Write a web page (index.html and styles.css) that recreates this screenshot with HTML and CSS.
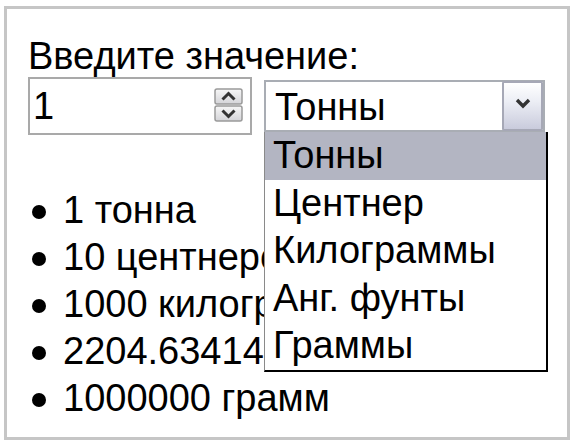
FILE: index.html
```html
<!DOCTYPE html>
<html lang="ru">
<head>
<meta charset="utf-8">
<title>Конвертер</title>
<link rel="stylesheet" href="styles.css">
</head>
<body>
<div class="frame">
  <div class="label">Введите значение:</div>
  <div class="controls">
    <div class="numbox">
      <span class="numval">1</span>
      <svg class="spin" width="29" height="34" viewBox="0 0 29 34">
        <defs>
          <linearGradient id="sg" x1="0" y1="0" x2="0" y2="1">
            <stop offset="0" stop-color="#f7f7f7"/>
            <stop offset="1" stop-color="#d4d4d8"/>
          </linearGradient>
        </defs>
        <rect x="1" y="1" width="27" height="15" rx="2" fill="url(#sg)" stroke="#9a9a9a" stroke-width="1.5"/>
        <rect x="1" y="18" width="27" height="15" rx="2" fill="url(#sg)" stroke="#9a9a9a" stroke-width="1.5"/>
        <path d="M8.5 11.5 L14.5 5.5 L20.5 11.5" fill="none" stroke="#333" stroke-width="3"/>
        <path d="M8.5 22.5 L14.5 28.5 L20.5 22.5" fill="none" stroke="#333" stroke-width="3"/>
      </svg>
    </div>
    <div class="selectwrap">
      <div class="select">
        <span class="selval">Тонны</span>
        <span class="selbtn">
          <svg width="16" height="11" viewBox="0 0 16 11">
            <path d="M2 2 L8 8 L14 2" fill="none" stroke="#333" stroke-width="3.4"/>
          </svg>
        </span>
      </div>
      <ul class="dropdown">
        <li class="opt active">Тонны</li>
        <li class="opt">Центнер</li>
        <li class="opt">Килограммы</li>
        <li class="opt">Анг. фунты</li>
        <li class="opt">Граммы</li>
      </ul>
    </div>
  </div>
  <ul class="results">
    <li>1 тонна</li>
    <li>10 центнеров</li>
    <li>1000 килограмм</li>
    <li>2204.634141 анг. фунтов</li>
    <li>1000000 грамм</li>
  </ul>
</div>
</body>
</html>
```
FILE: styles.css
```css
html, body {
  margin: 0;
  padding: 0;
  background: #ffffff;
}
body {
  font-family: "Liberation Sans", Arial, sans-serif;
  font-size: 38px;
  color: #000;
}
.frame {
  box-sizing: border-box;
  margin: 6px 0 0 4px;
  width: 566px;
  height: 434px;
  border: 3px solid #c6c6c6;
  padding: 26px 0 0 21px;
  overflow: hidden;
}
.label {
  line-height: 42px;
  height: 42px;
  white-space: nowrap;
}
.controls {
  display: flex;
  align-items: flex-start;
  gap: 12px;
}
.numbox {
  box-sizing: border-box;
  width: 224px;
  height: 58px;
  border: 2px solid #a9a9a9;
  display: flex;
  align-items: center;
  justify-content: space-between;
  padding: 0 7px 0 3px;
}
.numval {
  line-height: 1;
}
.spin {
  display: block;
  margin-top: -2px;
}
.selectwrap {
  position: relative;
  z-index: 2;
  margin-top: 3px;
}
.select {
  box-sizing: border-box;
  width: 281px;
  height: 52px;
  border: 2px solid #a9adb4;
  display: flex;
  align-items: center;
  justify-content: space-between;
  padding-left: 9px;
}
.selval {
  line-height: 1;
  margin-top: 2px;
}
.selbtn {
  box-sizing: border-box;
  width: 41px;
  height: 50px;
  margin-top: -1px;
  border: 2px solid #a6a8b6;
  border-radius: 2px;
  background: linear-gradient(#ffffff, #eceef5 40%, #c9cbdc);
  display: flex;
  align-items: center;
  justify-content: center;
}
.selbtn svg {
  display: block;
  margin-top: -4px;
}
.dropdown {
  position: absolute;
  left: 0;
  top: 100%;
  box-sizing: border-box;
  width: 284px;
  margin: 0;
  padding: 0;
  list-style: none;
  background: #fff;
  border-left: 1px solid #8a8a8a;
  border-right: 2px solid #000;
  border-bottom: 2px solid #000;
}
.opt {
  height: 47.5px;
  line-height: 47.5px;
  padding-left: 8px;
  white-space: nowrap;
}
.opt.active {
  background: #b3b5c2;
}
.results {
  list-style: none;
  margin: 52px 0 0 0;
  padding: 0;
}
.results li {
  display: flex;
  align-items: center;
  height: 47px;
  line-height: 47px;
  white-space: nowrap;
}
.results li::before {
  content: "";
  flex: none;
  width: 14px;
  height: 14px;
  border-radius: 50%;
  background: #000;
  margin: 2px 17px 0 4px;
}
```
